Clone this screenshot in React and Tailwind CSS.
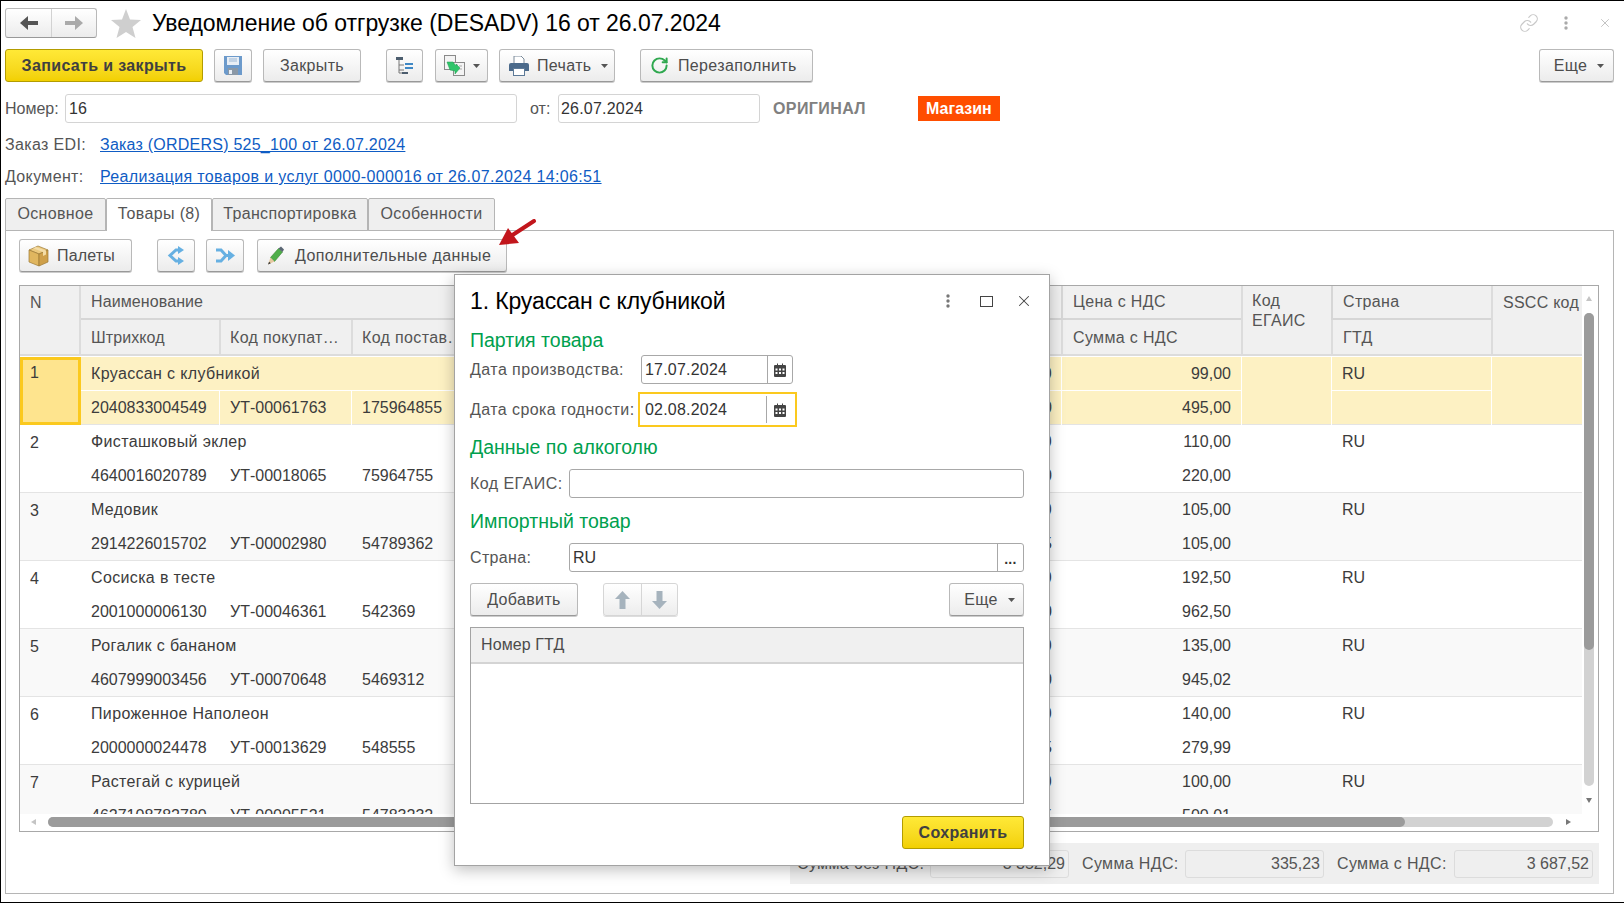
import React from "react";
import { Link, RotateCw, X } from "lucide-react";

const cols = "grid-cols-[61px_138px_132px_710px_180px_90px_160px_91px]";

const rows = [
  { n: 1, name: "Круассан с клубникой", code: "2040833004549", buyer: "УТ-00061763", supplier: "175964855", price: "99,00", sum: "495,00", d1: "0", d2: "0" },
  { n: 2, name: "Фисташковый эклер", code: "4640016020789", buyer: "УТ-00018065", supplier: "75964755", price: "110,00", sum: "220,00", d1: "0", d2: "0" },
  { n: 3, name: "Медовик", code: "2914226015702", buyer: "УТ-00002980", supplier: "54789362", price: "105,00", sum: "105,00", d1: "0", d2: "5" },
  { n: 4, name: "Сосиска в тесте", code: "2001000006130", buyer: "УТ-00046361", supplier: "542369", price: "192,50", sum: "962,50", d1: "0", d2: "0" },
  { n: 5, name: "Рогалик с бананом", code: "4607999003456", buyer: "УТ-00070648", supplier: "5469312", price: "135,00", sum: "945,02", d1: "0", d2: "0" },
  { n: 6, name: "Пироженное Наполеон", code: "2000000024478", buyer: "УТ-00013629", supplier: "548555", price: "140,00", sum: "279,99", d1: "0", d2: "5" },
  { n: 7, name: "Растегай с курицей", code: "4627108782780", buyer: "УТ-00005521", supplier: "54783232", price: "100,00", sum: "500,01", d1: "0", d2: "5" },
];

const Caret = () => (
  <svg width="7" height="4" viewBox="0 0 7 4" className="shrink-0">
    <path d="M0 0H7L3.5 4Z" fill="#555" />
  </svg>
);

const Btn = ({ className = "", children }) => (
  <div className={`h-[33px] flex items-center justify-center shrink-0 rounded-[3px] border border-[#b9b9b9] border-b-[#999] bg-gradient-to-b from-white to-[#ececec] shadow-[0_1px_0_#ccc] text-[#4d4d4d] ${className}`}>
    {children}
  </div>
);

const YellowBtn = ({ className = "", children }) => (
  <div className={`h-[33px] flex items-center justify-center shrink-0 rounded-[3px] border border-[#b39c00] bg-gradient-to-b from-[#ffe936] to-[#f2d000] font-bold text-[#404040] ${className}`}>
    {children}
  </div>
);

const CalendarIcon = () => (
  <svg width="12" height="14" viewBox="0 0 12 14">
    <path d="M1 2H3V0.5H4V2H8V0.5H9V2H11a1 1 0 0 1 1 1V13a1 1 0 0 1-1 1H1a1 1 0 0 1-1-1V3a1 1 0 0 1 1-1Z" fill="#444" />
    <path d="M1.5 5.5H3.5V7.5H1.5ZM5 5.5H7V7.5H5ZM8.5 5.5H10.5V7.5H8.5ZM1.5 9H3.5V11H1.5ZM5 9H7V11H5ZM8.5 9H10.5V11H8.5Z" fill="#fff" />
  </svg>
);

const SaveIcon = () => (
  <svg width="18" height="19" viewBox="0 0 18 19">
    <path d="M0 0H18V19H2L0 17Z" fill="#6c9acb" />
    <rect x="3" y="1" width="12" height="8" fill="#e8eef5" />
    <path d="M5 3H13M5 5H13" stroke="#9bb7d4" />
    <rect x="4" y="12" width="10" height="7" fill="#8a98a6" />
    <rect x="5" y="14" width="3" height="4" fill="#e8eef5" />
  </svg>
);

const TreeIcon = () => (
  <svg width="18" height="20" viewBox="0 0 18 20">
    <path d="M3 4V17M3 9H8M3 14H8M3 17H8" stroke="#777" fill="none" />
    <rect x="0" y="1" width="7" height="3" fill="#4c5d6e" />
    <rect x="9" y="7" width="8" height="2" fill="#3f88c5" />
    <rect x="9" y="11" width="8" height="2" fill="#3f88c5" />
    <rect x="6" y="16" width="6" height="2" fill="#4c5d6e" />
  </svg>
);

const CopyIcon = () => (
  <svg width="21" height="21" viewBox="0 0 21 21">
    <rect x="0.5" y="0.5" width="11" height="14" fill="#f4f4f4" stroke="#8a8a8a" />
    <rect x="9.5" y="7.5" width="11" height="13" fill="#f4f4f4" stroke="#8a8a8a" />
    <path d="M13 9V12M15 11H18M15 14H18" stroke="#aaa" />
    <path d="M3 7L9 7L12 11V9L16 13L11 19V16L6 15Z" fill="#2fc56a" stroke="#1d9b4f" strokeWidth="0.5" />
  </svg>
);

const PrinterIcon = () => (
  <svg width="20" height="20" viewBox="0 0 20 20">
    <path d="M5 0H12L15 3V8H5Z" fill="#fff" stroke="#7a8a99" />
    <path d="M2 7H18a2 2 0 0 1 2 2V15H0V9a2 2 0 0 1 2-2Z" fill="#4b6a8b" />
    <rect x="4.5" y="12.5" width="11" height="7" fill="#fff" stroke="#5d7a98" />
  </svg>
);

const BoxIcon = () => (
  <svg width="21" height="22" viewBox="0 0 21 22">
    <path d="M1 5L10 1L20 5L11 9Z" fill="#ecc97e" stroke="#9c7a35" strokeWidth="0.7" />
    <path d="M1 5L11 9V21L1 17Z" fill="#e0b65f" stroke="#9c7a35" strokeWidth="0.7" />
    <path d="M20 5L11 9V21L20 17Z" fill="#cfa04a" stroke="#9c7a35" strokeWidth="0.7" />
    <path d="M5 3.2L15 7V11L18 9.6V5.6L8 2Z" fill="#f3dca6" />
  </svg>
);

const SplitIcon = () => (
  <svg width="19" height="19" viewBox="0 0 19 19">
    <path d="M12 4H9L3 9.5L9 15H12" fill="none" stroke="#66b0e2" strokeWidth="3" />
    <path d="M11 0L17 4L11 8ZM11 11L17 15L11 19Z" fill="#66b0e2" />
  </svg>
);

const MergeIcon = () => (
  <svg width="19" height="17" viewBox="0 0 19 17">
    <path d="M0 3H5L10 8.5L5 14H0M9 8.5H13" fill="none" stroke="#66b0e2" strokeWidth="3" />
    <path d="M12 3L19 8.5L12 14Z" fill="#66b0e2" />
  </svg>
);

const PencilIcon = () => (
  <svg width="17" height="19" viewBox="0 0 17 19">
    <path d="M3.5 11.5L11.5 2.5L15.5 6L7.5 15.5Z" fill="#4fae4a" stroke="#37812f" strokeWidth="0.6" />
    <path d="M11.5 2.5L14 0.5L17 3.6L15.5 6Z" fill="#5a6673" />
    <path d="M3.5 11.5L7.5 15.5L1 18.5Z" fill="#e6c9a0" />
    <path d="M2.1 15.8L3.8 17.3L1 18.5Z" fill="#333" />
  </svg>
);

const ArrowUp = () => (
  <svg width="15" height="18" viewBox="0 0 15 18">
    <path d="M7.5 0L15 8H10.5V18H4.5V8H0Z" fill="#a6b3bd" />
  </svg>
);

const ArrowDown = () => (
  <svg width="15" height="18" viewBox="0 0 15 18">
    <path d="M7.5 18L15 10H10.5V0H4.5V10H0Z" fill="#a6b3bd" />
  </svg>
);

const Dots = ({ color = "#777" }) => (
  <svg width="4" height="14" viewBox="0 0 4 14">
    <circle cx="2" cy="2" r="1.7" fill={color} />
    <circle cx="2" cy="7" r="1.7" fill={color} />
    <circle cx="2" cy="12" r="1.7" fill={color} />
  </svg>
);

const Input = ({ className = "", children }) => (
  <div className={`h-[29px] flex items-center shrink-0 rounded-[3px] border border-[#d4d4d4] bg-white text-[#333] ${className}`}>
    {children}
  </div>
);

const Heading = ({ className = "", children }) => (
  <div className={`h-6 flex items-center text-[19.5px] tracking-normal text-[#00a04e] ${className}`}>{children}</div>
);

const TableRow = ({ row, index }) => {
  const selected = index === 0;
  const bg = selected ? "bg-[#fdf1c3]" : index % 2 === 0 ? "bg-[#f9f9f9]" : "bg-white";
  const line = selected ? "border-white" : "border-transparent";
  return (
    <div className={`grid ${cols} grid-rows-[34px_34px] text-[#3c3c3c] border-b border-[#e4e4e4] h-[68px] ${bg}`}>
      <div className={`row-span-2 tracking-normal ${selected ? "bg-[#fee48e] border-[3px] border-[#fbc91e] pl-[7px] pt-[1px]" : "pl-2.5 pt-[6px]"}`}>{row.n}</div>
      <div className={`col-span-3 pl-2.5 pr-[9px] flex items-center justify-between border-b ${line}`}>
        <span>{row.name}</span>
        <span>{row.d1}</span>
      </div>
      <div className={`pr-[10px] tracking-normal flex items-center justify-end border-b border-l ${line}`}>{row.price}</div>
      <div className={`row-span-2 border-l ${line}`}></div>
      <div className={`pl-[10px] tracking-normal flex items-center border-b border-l ${line}`}>RU</div>
      <div className={`row-span-2 border-l ${line}`}></div>
      <div className="pl-2.5 tracking-normal flex items-center">{row.code}</div>
      <div className={`pl-2.5 tracking-normal flex items-center border-l ${line}`}>{row.buyer}</div>
      <div className={`pl-2.5 pr-[9px] tracking-normal flex items-center justify-between border-l ${line}`}>
        <span>{row.supplier}</span>
        <span>{row.d2}</span>
      </div>
      <div className={`pr-[10px] tracking-normal flex items-center justify-end border-l ${line}`}>{row.sum}</div>
      <div className={`border-l ${line}`}></div>
    </div>
  );
};

const Dialog = () => (
  <div className="absolute left-[453px] top-[273px] w-[596px] h-[592px] z-20 bg-white border border-[#a3a3a3] shadow-[0_4px_14px_rgba(0,0,0,0.25)] pl-[15px] pr-[25px] text-[16px] text-[#555]">
    <div className="mt-[12px] h-7 flex items-center text-[23px] tracking-[-0.13px] text-black">
      <span className="flex-1">1. Круассан с клубникой</span>
      <span className="mr-[30px]"><Dots /></span>
      <span className="w-[13px] h-[11px] border border-[#444] mr-[22px]"></span>
      <X size={18} strokeWidth={1.4} color="#444" className="-mr-[9px]" />
    </div>
    <Heading className="mt-[14px]">Партия товара</Heading>
    <div className="mt-[2px] flex items-center h-[29px]">
      <span className="w-[171px] tracking-[0.45px]">Дата производства:</span>
      <div className="w-[152px] h-[29px] flex items-center rounded-[3px] border border-[#a8a8a8] text-[#333]">
        <span className="flex-1 pl-[3px] tracking-[0.2px]">17.07.2024</span>
        <span className="w-[25px] h-full flex items-center justify-center border-l border-[#a8a8a8]"><CalendarIcon /></span>
      </div>
    </div>
    <div className="mt-[8px] flex items-center h-[35px]">
      <span className="w-[168px] tracking-[0.42px]">Дата срока годности:</span>
      <div className="w-[159px] h-[35px] flex items-center border-2 border-[#fbc91e] text-[#333] pr-[3px]">
        <span className="flex-1 pl-[5px] tracking-[0.2px]">02.08.2024</span>
        <span className="w-[26px] h-[27px] flex items-center justify-center border-l border-[#a8a8a8]"><CalendarIcon /></span>
      </div>
    </div>
    <Heading className="mt-[9px]">Данные по алкоголю</Heading>
    <div className="mt-[9px] flex items-center h-[29px]">
      <span className="w-[99px] tracking-[0.45px]">Код ЕГАИС:</span>
      <div className="flex-1 h-[29px] rounded-[3px] border border-[#a8a8a8]"></div>
    </div>
    <Heading className="mt-[12px]">Импортный товар</Heading>
    <div className="mt-[9px] flex items-center h-[29px]">
      <span className="w-[99px]">Страна:</span>
      <div className="flex-1 h-[29px] flex items-center rounded-[3px] border border-[#a8a8a8] text-[#333]">
        <span className="flex-1 pl-[3px] tracking-normal">RU</span>
        <span className="w-[26px] h-full flex items-center justify-center border-l border-[#a8a8a8] font-bold text-[14px] pt-[4px]">...</span>
      </div>
    </div>
    <div className="mt-[11px] flex items-center">
      <Btn className="w-[108px]">Добавить</Btn>
      <div className="ml-[25px] w-[75px] h-[33px] flex rounded-[3px] border border-[#d6d6d6] bg-gradient-to-b from-white to-[#ededed] shadow-[0_1px_0_#ddd]">
        <span className="w-[38px] flex items-center justify-center border-r border-[#d6d6d6]"><ArrowUp /></span>
        <span className="flex-1 flex items-center justify-center"><ArrowDown /></span>
      </div>
      <Btn className="ml-auto w-[75px] gap-[10px] pl-[6px]">Еще <Caret /></Btn>
    </div>
    <div className="mt-[11px] h-[177px] border border-[#a3a3a3]">
      <div className="h-[36px] flex items-center pl-[10px] bg-[#f0f0f0] border-b-2 border-[#d4d4d4] text-[#4b4b4b] tracking-[0.1px]">Номер ГТД</div>
    </div>
    <div className="mt-[12px] flex justify-end">
      <YellowBtn className="w-[122px]">Сохранить</YellowBtn>
    </div>
  </div>
);

const App = () => {
  return (
    <div className="relative w-[1624px] h-[903px] overflow-hidden bg-white border-t border-l border-b border-black pl-[4px] pr-[10px] text-[16px] tracking-[0.35px] text-[#555] font-['Liberation_Sans',Arial,sans-serif]">

      {/* Title row */}
      <div className="mt-[7px] h-[30px] flex items-center">
        <div className="w-[92px] h-[30px] flex shrink-0 rounded-[3px] border border-[#b9b9b9] border-b-[#999] bg-gradient-to-b from-white to-[#ececec]">
          <span className="w-[46px] flex items-center justify-center border-r border-[#d2d2d2]">
            <svg width="18" height="14" viewBox="0 0 18 14"><path d="M0 7L8 0V5H18V9H8V14Z" fill="#555" /></svg>
          </span>
          <span className="flex-1 flex items-center justify-center">
            <svg width="18" height="14" viewBox="0 0 18 14"><path d="M18 7L10 0V5H0V9H10V14Z" fill="#aaa" /></svg>
          </span>
        </div>
        <svg width="30" height="29" viewBox="0 0 30 29" className="ml-[14px]">
          <path d="M15 0L19 10.5L30 11L21.5 18L24.5 29L15 23L5.5 29L8.5 18L0 11L11 10.5Z" fill="#cfcfcf" />
        </svg>
        <h1 className="ml-[11px] text-[23px] tracking-[-0.04px] text-black">Уведомление об отгрузке (DESADV) 16 от 26.07.2024</h1>
        <div className="ml-auto flex items-center">
          <Link size={20} strokeWidth={1.4} color="#c8c8c8" />
          <span className="ml-[25px]"><Dots color="#aaa" /></span>
          <X size={14} strokeWidth={1.4} color="#b5b5b5" className="ml-[30px] mr-[2px]" />
        </div>
      </div>

      {/* Command bar */}
      <div className="mt-[11px] h-[33px] flex items-center">
        <YellowBtn className="w-[198px]">Записать и закрыть</YellowBtn>
        <Btn className="ml-[11px] w-[38px]"><SaveIcon /></Btn>
        <Btn className="ml-[11px] w-[98px]">Закрыть</Btn>
        <Btn className="ml-[25px] w-[37px]"><TreeIcon /></Btn>
        <Btn className="ml-[12px] w-[53px] gap-[8px]"><CopyIcon /><Caret /></Btn>
        <Btn className="ml-[11px] w-[116px] !justify-start pl-[9px]">
          <PrinterIcon />
          <span className="ml-[8px]">Печать</span>
          <span className="ml-[9px]"><Caret /></span>
        </Btn>
        <Btn className="ml-[25px] w-[173px] !justify-start pl-[9px] gap-[9px]"><RotateCw size={19} strokeWidth={2.5} color="#2fa84f" /> Перезаполнить</Btn>
        <Btn className="ml-auto w-[75px] gap-[10px] pl-[5px]">Еще <Caret /></Btn>
      </div>

      {/* Number and date */}
      <div className="mt-[12px] h-[29px] flex items-center">
        <span className="w-[60px] tracking-normal">Номер:</span>
        <Input className="w-[452px] pl-[3px] tracking-normal">16</Input>
        <span className="ml-[13px] w-[28px] tracking-normal">от:</span>
        <Input className="w-[202px] pl-[2px] tracking-[0.2px]">26.07.2024</Input>
        <span className="ml-[13px] font-bold tracking-[0.4px] text-[#808080]">ОРИГИНАЛ</span>
        <span className="ml-[52px] w-[82px] h-[25px] flex items-center justify-center bg-[#ff4e00] text-white font-bold tracking-normal">Магазин</span>
      </div>

      <div className="mt-[12px] h-5 flex items-center">
        <span className="w-[95px]">Заказ EDI:</span>
        <span className="text-[#0f5cc4] underline tracking-[0.23px]">Заказ (ORDERS) 525_100 от 26.07.2024</span>
      </div>
      <div className="mt-[12px] h-5 flex items-center">
        <span className="w-[95px]">Документ:</span>
        <span className="text-[#0f5cc4] underline">Реализация товаров и услуг 0000-000016 от 26.07.2024 14:06:51</span>
      </div>

      {/* Tabs */}
      <div className="mt-[11px] h-[33px] flex relative z-10 -mb-px">
        <div className="w-[101px] pb-[2px] flex items-center justify-center border border-[#b5b5b5] bg-[#efefef] rounded-t-[2px]">Основное</div>
        <div className="w-[106px] pb-[2px] flex items-center justify-center border border-b-0 border-[#b5b5b5] bg-white rounded-t-[2px]">Товары (8)</div>
        <div className="w-[156px] pb-[2px] flex items-center justify-center border border-[#b5b5b5] bg-[#efefef] rounded-t-[2px]">Транспортировка</div>
        <div className="w-[127px] pb-[2px] flex items-center justify-center border border-[#b5b5b5] bg-[#efefef] rounded-t-[2px]">Особенности</div>
      </div>

      {/* Tab panel */}
      <div className="h-[664px] border border-[#b5b5b5] pt-[8px] pl-[13px] pr-[14px]">
        <div className="h-[33px] flex items-center">
          <Btn className="w-[113px] !justify-start pl-[8px] gap-[8px] tracking-[0.15px]"><BoxIcon /> Палеты</Btn>
          <Btn className="ml-[25px] w-[38px]"><SplitIcon /></Btn>
          <Btn className="ml-[11px] w-[38px]"><MergeIcon /></Btn>
          <Btn className="ml-[13px] w-[250px] !justify-start pl-[9px] gap-[11px] tracking-[0.42px]"><PencilIcon /> Дополнительные данные</Btn>
        </div>

        {/* Goods table */}
        <div className="relative mt-[13px] h-[547px] border border-[#a8a8a8] text-[#3c3c3c]">
          <div className={`grid ${cols} grid-rows-[34px_36px] w-[1562px] bg-[#f0f0f0] text-[#555]`}>
            <div className="row-span-2 pl-2.5 pt-[5px] border-r-2 border-[#dcdcdc] border-b-2">N</div>
            <div className="col-span-3 pl-2.5 flex items-center border-b-2 border-[#d6d6d6] tracking-[0.1px]">Наименование</div>
            <div className="pl-[10px] flex items-center border-b-2 border-l-2 border-[#d6d6d6]">Цена с НДС</div>
            <div className="row-span-2 pl-[9px] pt-[5px] leading-[20px] border-l-2 border-b-2 border-[#dcdcdc]">Код<br />ЕГАИС</div>
            <div className="pl-[10px] flex items-center border-b-2 border-l-2 border-[#d6d6d6]">Страна</div>
            <div className="row-span-2 pl-[10px] pt-[5px] tracking-[0.25px] border-l-2 border-b-2 border-[#dcdcdc]">SSCC код</div>
            <div className="pl-2.5 pt-px flex items-center border-b-2 border-[#dcdcdc] tracking-[0.1px]">Штрихкод</div>
            <div className="pl-[9px] pt-px flex items-center border-b-2 border-l-2 border-[#dcdcdc]">Код покупат…</div>
            <div className="pl-[9px] pt-px flex items-center border-b-2 border-l-2 border-[#dcdcdc]">Код постав…</div>
            <div className="pl-[10px] pt-px flex items-center border-b-2 border-l-2 border-[#dcdcdc]">Сумма с НДС</div>
            <div className="pl-[10px] pt-px flex items-center border-b-2 border-l-2 border-[#dcdcdc]">ГТД</div>
          </div>
          <div className="w-[1562px] h-[458px] pt-px overflow-hidden">
            {rows.map((row, i) => (
              <TableRow key={row.n} row={row} index={i} />
            ))}
          </div>

          {/* Scrollbars */}
          <div className="absolute left-[28px] top-[531px] w-[1505px] h-[10px] rounded-full bg-[#d2d2d2]">
            <div className="w-[1357px] h-full rounded-full bg-[#9b9b9b]"></div>
          </div>
          <div className="absolute left-[1564px] top-[27px] w-[10px] h-[473px] rounded-full bg-[#d2d2d2]">
            <div className="w-full h-[337px] rounded-full bg-[#9b9b9b]"></div>
          </div>
          <svg width="6" height="5" viewBox="0 0 6 5" className="absolute left-[1566px] top-[10px]"><path d="M3 0L6 5H0Z" fill="#c4c4c4" /></svg>
          <svg width="6" height="5" viewBox="0 0 6 5" className="absolute left-[1566px] top-[512px]"><path d="M3 5L6 0H0Z" fill="#777" /></svg>
          <svg width="5" height="6" viewBox="0 0 5 6" className="absolute left-[11px] top-[533px]"><path d="M0 3L5 0V6Z" fill="#c4c4c4" /></svg>
          <svg width="5" height="6" viewBox="0 0 5 6" className="absolute left-[1546px] top-[533px]"><path d="M5 3L0 0V6Z" fill="#777" /></svg>
        </div>

        {/* Totals */}
        <div className="mt-[11px] ml-auto w-[809px] h-[41px] flex items-center bg-[#efefef] pl-[7px]">
          <span className="w-[133px]">Сумма без НДС:</span>
          <div className="w-[139px] h-[28px] flex items-center justify-end pr-[3px] tracking-normal rounded-[3px] border border-[#dcdcdc]">3 352,29</div>
          <span className="ml-[13px] w-[103px]">Сумма НДС:</span>
          <div className="w-[139px] h-[28px] flex items-center justify-end pr-[3px] tracking-normal rounded-[3px] border border-[#dcdcdc]">335,23</div>
          <span className="ml-[13px] w-[117px]">Сумма с НДС:</span>
          <div className="w-[139px] h-[28px] flex items-center justify-end pr-[3px] tracking-normal rounded-[3px] border border-[#dcdcdc]">3 687,52</div>
        </div>
      </div>

      <Dialog />

      {/* Red pointer */}
      <svg width="40" height="28" viewBox="0 0 40 28" className="absolute left-[496px] top-[218px] z-10">
        <path d="M37 2L14 17" stroke="#c2161c" strokeWidth="4" strokeLinecap="round" />
        <path d="M2 26L22 24L11 9Z" fill="#c2161c" />
      </svg>
    </div>
  );
};

export default App;
